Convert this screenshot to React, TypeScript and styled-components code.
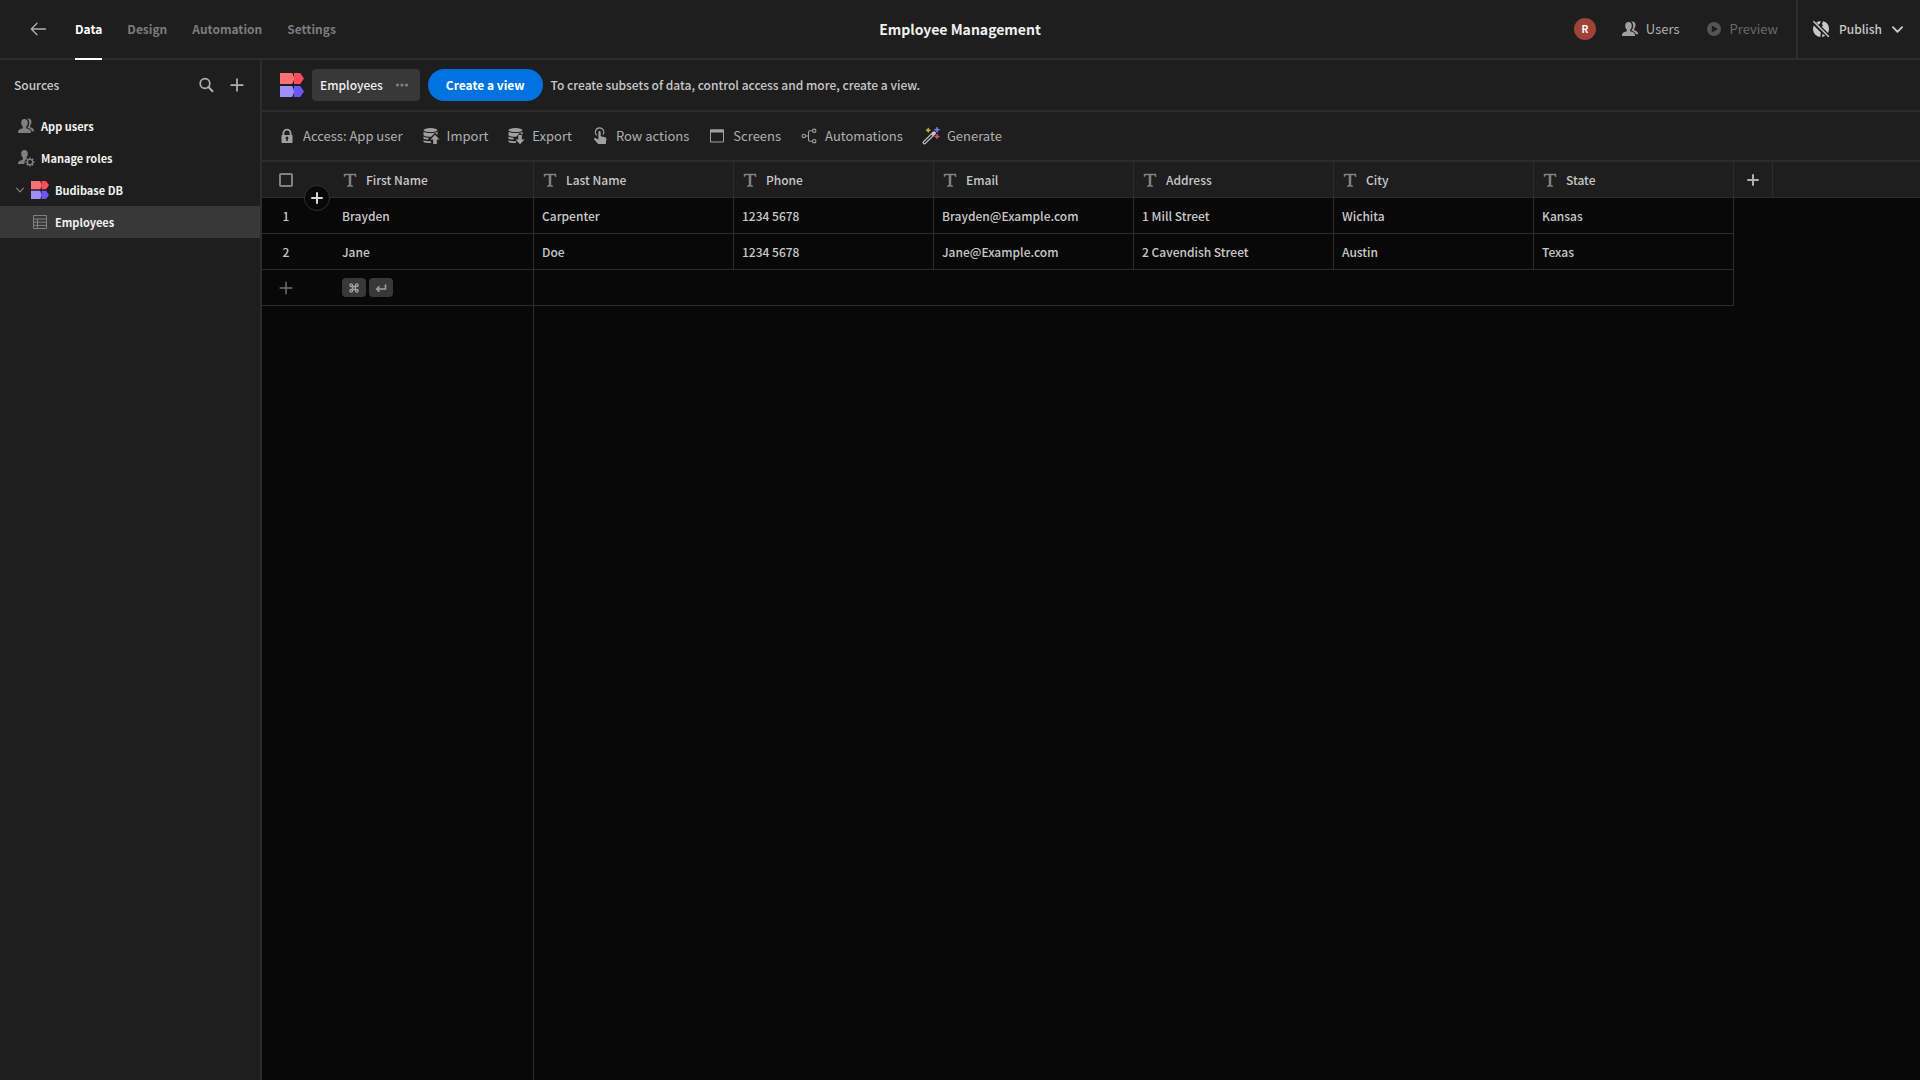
import React from "react";
import styled, { createGlobalStyle } from "styled-components";

const c = {
  panel: "#1e1e1e",
  canvas: "#080808",
  line: "#2c2c2c",
  raised: "#383838",
  text: "#c8c8c8",
  bright: "#f0f0f0",
  soft: "#b0b0b0",
  muted: "#7c7c7c",
  icon: "#a0a0a0",
  accent: "#0073e0",
};

const GlobalStyle = createGlobalStyle`
  *, *::before, *::after { box-sizing: border-box; }
  body { margin: 0; background: ${c.canvas}; }
  body, button, input, table {
    font-family: "Noto Sans CJK SC", "Noto Sans", sans-serif;
    font-size: 12px;
    line-height: 20px;
    color: ${c.text};
  }
  button { background: none; border: 0; padding: 0; cursor: pointer; }
  a { color: inherit; text-decoration: none; }
  svg { display: block; flex: none; }
`;

const Page = styled.div`
  min-height: 100vh;
  display: flex;
  flex-direction: column;
`;

const TopBar = styled.header`
  display: grid;
  grid-template-columns: 1fr auto 1fr;
  height: 60px;
  background: ${c.panel};
  border-bottom: 2px solid ${c.line};
`;

const TopLeft = styled.div`
  display: flex;
  align-items: stretch;
  gap: 28px;
  padding-left: 30px;
`;

const IconButton = styled.button<{ $muted?: boolean }>`
  display: flex;
  align-items: center;
  justify-content: center;
  min-width: 16px;
  color: ${(p) => (p.$muted ? "#707070" : c.soft)};
`;

const Tabs = styled.nav`
  display: flex;
  gap: 25px;
`;

const Tab = styled.a<{ $active?: boolean }>`
  display: flex;
  align-items: center;
  font-weight: 700;
  color: ${(p) => (p.$active ? "#ffffff" : c.muted)};
  border-bottom: 2px solid ${(p) => (p.$active ? "#ffffff" : "transparent")};
  margin-bottom: -2px;
`;

const AppTitle = styled.h1`
  margin: 0;
  align-self: center;
  font-size: 14px;
  font-weight: 700;
  color: ${c.bright};
`;

const TopRight = styled.div`
  display: flex;
  align-items: stretch;
  justify-content: flex-end;
`;

const TopActions = styled.div`
  display: flex;
  align-items: center;
  gap: 25px;
  padding-right: 18px;
`;

const Avatar = styled.span`
  display: flex;
  align-items: center;
  justify-content: center;
  width: 22px;
  height: 22px;
  border-radius: 50%;
  background: #9f4238;
  color: #ffffff;
  font-size: 10px;
  font-weight: 700;
`;

const Action = styled.button<{ $dim?: boolean }>`
  display: flex;
  align-items: center;
  gap: 7px;
  font-size: 13px;
  color: ${(p) => (p.$dim ? "#6a6a6a" : c.soft)};
  svg { color: ${(p) => (p.$dim ? "#555555" : c.icon)}; }
`;

const Publish = styled.button`
  display: flex;
  align-items: center;
  gap: 9px;
  padding: 0 16px 0 14px;
  border-left: 2px solid ${c.line};
  font-weight: 500;
  color: ${c.text};
`;

const Body = styled.div`
  flex: 1;
  display: flex;
`;

const Sidebar = styled.aside`
  flex: none;
  width: 262px;
  background: ${c.panel};
  border-right: 2px solid ${c.line};
`;

const SidebarHead = styled.div`
  display: flex;
  align-items: center;
  gap: 14px;
  height: 50px;
  padding: 0 15px 0 14px;
`;

const SidebarTitle = styled.h2`
  flex: 1;
  margin: 0;
  font-size: 12px;
  font-weight: 500;
  color: ${c.text};
`;

const NavItem = styled.a<{ $level?: number; $active?: boolean }>`
  display: flex;
  align-items: center;
  gap: 6px;
  height: 32px;
  padding-left: ${(p) => (p.$level === 2 ? 31 : p.$level === 1 ? 15 : 17)}px;
  font-size: 11px;
  font-weight: 700;
  color: ${c.bright};
  background: ${(p) => (p.$active ? c.raised : "transparent")};
  svg { color: #808080; }
`;

const Main = styled.main`
  flex: 1;
  min-width: 0;
  display: flex;
  flex-direction: column;
`;

const SourceBar = styled.div`
  display: flex;
  align-items: center;
  gap: 8px;
  height: 52px;
  padding-left: 18px;
  background: ${c.panel};
  border-bottom: 2px solid ${c.line};
`;

const TableTab = styled.button`
  display: flex;
  align-items: center;
  gap: 12px;
  height: 32px;
  padding: 0 11px 0 8px;
  border-radius: 4px;
  background: ${c.raised};
  color: ${c.bright};
  font-weight: 500;
  svg { color: #828282; }
`;

const CreateView = styled.button`
  height: 32px;
  padding: 0 18px;
  border-radius: 16px;
  background: ${c.accent};
  color: #ffffff;
  font-weight: 700;
`;

const Hint = styled.p`
  margin: 0;
  font-weight: 500;
`;

const Toolbar = styled.div`
  display: flex;
  align-items: center;
  gap: 19px;
  height: 50px;
  padding-left: 16px;
  background: ${c.panel};
  border-bottom: 2px solid ${c.line};
`;

const GridArea = styled.div`
  position: relative;
  flex: 1;
  display: flex;
  flex-direction: column;
  background: ${c.canvas};
`;

const Table = styled.table`
  width: 100%;
  table-layout: fixed;
  border-collapse: separate;
  border-spacing: 0;
  font-weight: 500;
`;

const Col = styled.col<{ $w?: number }>`
  width: ${(p) => (p.$w ? `${p.$w}px` : "auto")};
`;

const HeadCell = styled.th<{ $edge?: boolean }>`
  height: 36px;
  padding: 0 8px;
  text-align: left;
  font-weight: 500;
  background: ${c.panel};
  border-bottom: 1px solid ${c.line};
  border-right: ${(p) => (p.$edge ? `1px solid ${c.line}` : "0")};
`;

const Cell = styled.td<{ $edge?: boolean }>`
  height: 36px;
  padding: 0 8px;
  border-bottom: 1px solid ${c.line};
  border-right: ${(p) => (p.$edge ? `1px solid ${c.line}` : "0")};
`;

const GutterCell = styled(Cell)`
  padding: 0 24px 0 0;
  text-align: center;
`;

const Label = styled.span`
  display: flex;
  align-items: center;
  gap: 8px;
`;

const Center = styled.span`
  display: flex;
  align-items: center;
  justify-content: center;
`;

const Check = styled.input`
  appearance: none;
  display: block;
  width: 14px;
  height: 14px;
  margin: 0 0 0 9px;
  border: 2px solid #808080;
  border-radius: 2px;
`;

const Keys = styled.span`
  display: flex;
  gap: 3px;
`;

const Key = styled.kbd`
  display: flex;
  align-items: center;
  justify-content: center;
  width: 24px;
  height: 19px;
  border-radius: 4px;
  background: ${c.raised};
  color: ${c.icon};
`;

const StickyRest = styled.div`
  flex: 1;
  width: 272px;
  border-right: 1px solid ${c.line};
`;

const InsertRow = styled.button`
  position: absolute;
  top: 23px;
  left: 42px;
  display: flex;
  align-items: center;
  justify-content: center;
  width: 26px;
  height: 26px;
  border: 1px solid #303030;
  border-radius: 50%;
  background: ${c.canvas};
  color: #d8d8d8;
`;

const Svg = ({ s = 18, children }: { s?: number; children: React.ReactNode }) => (
  <svg width={s} height={s} viewBox="0 0 18 18" fill="currentColor" aria-hidden="true">
    {children}
  </svg>
);

const Plus = ({ s = 12, w = 2 }: { s?: number; w?: number }) => (
  <svg width={s} height={s} viewBox="0 0 12 12" fill="none" stroke="currentColor" strokeWidth={w} strokeLinecap="round" aria-hidden="true">
    <path d="M6 1v10M1 6h10" />
  </svg>
);

const Logo = ({ s }: { s: number }) => (
  <svg width={s} height={s} viewBox="0 0 24 24" aria-hidden="true">
    <path d="M0 0h11.600c.4 0 .7.2.9.5L14 4.500v2l-1.500 4c-.2.3-.5.5-.9.500H0z" fill="#ff7076" />
    <path d="M14 0h5.400c.5 0 .9.2 1.200.6L24 5.500l-3.400 4.900c-.3.4-.7.6-1.200.6H14z" fill="#ff4b5c" />
    <path d="M0 13h11.600c.4 0 .7.2.9.5l1.500 4v2l-1.500 4c-.2.3-.5.5-.9.500H0z" fill="#a08ffa" />
    <path d="M14 13h5.400c.5 0 .9.2 1.200.6L24 18.500l-3.400 4.900c-.3.4-.7.6-1.200.6H14z" fill="#6b57f2" />
  </svg>
);

const UsersIcon = () => (
  <Svg>
    <path d="M7.500 2C5.300 2 4.200 3.600 4.200 5.700c0 1.600.7 3 1.600 3.900v1.300c0 .4-.3.600-.7.700C2.600 12.200 1 13.300 1 15.300v.700h13v-.700c0-2-1.600-3.100-4.100-3.700-.4-.1-.7-.3-.7-.7V9.600c.9-.9 1.600-2.300 1.600-3.900C10.800 3.600 9.700 2 7.500 2z" />
    <path d="M10.300 1.500c2.500-.5 4.200 1 4.200 3.400 0 1.500-.5 2.700-1.300 3.500v1.300c0 .4.2.6.6.7 2 .6 3.300 1.600 3.300 3.300v.5h-2.200c-.5-1.700-2-2.800-4.200-3.500v-.6c.9-1.100 1.500-2.600 1.500-4.200 0-1.900-.700-3.400-1.900-4.400z" />
  </Svg>
);

const RolesIcon = () => (
  <Svg>
    <path d="M7.500 1C5.300 1 4.200 2.600 4.200 4.700c0 1.600.7 3 1.600 3.900v1.600c0 .4-.3.600-.7.700C2.600 11.500 1 12.500 1 14.500v.5h6.500a5.600 5.600 0 0 1 2.500-5.400c-.5-.2-.8-.5-.8-1 .9-.9 1.600-2.300 1.600-3.900C10.800 2.600 9.700 1 7.500 1z" />
    <circle cx="13" cy="13" r="2.700" fill="none" stroke="currentColor" strokeWidth="1.300" />
    <path d="M13 8.500v1.800M13 15.700v1.800M8.500 13h1.800M15.700 13h1.800M9.800 9.800l1.300 1.300M14.900 14.900l1.300 1.300M9.800 16.200l1.300-1.300M14.900 11.100l1.300-1.300" stroke="currentColor" strokeWidth="1.500" />
  </Svg>
);

const TableIcon = () => (
  <Svg>
    <path d="M2.500 2.500h13v13h-13zM2.500 6h13M2.500 9.200h13M2.500 12.400h13M6.500 6v9.500" fill="none" stroke="currentColor" />
  </Svg>
);

const LockIcon = () => (
  <Svg>
    <path fillRule="evenodd" d="M14 8h-.5V6.300a4.500 4.500 0 0 0-9 0V8H4c-.3 0-.5.2-.5.5v7c0 .3.200.5.500.5h10c.3 0 .5-.2.5-.5v-7c0-.3-.2-.5-.5-.5zM6.300 6.300a2.700 2.700 0 0 1 5.400 0V8H6.300zM9.800 12.200V14H8.200v-1.800a1.400 1.400 0 1 1 1.600 0z" />
  </Svg>
);

const DataIcon = ({ down }: { down?: boolean }) => (
  <Svg>
    <ellipse cx="8.500" cy="3.100" rx="7" ry="2" />
    <path d="M1.500 4.800c2.500 1.700 11.500 1.700 14 0v3.100L13 5.800 9.200 9.700C6 9.800 3 9.400 1.500 8.200zM1.500 9.600c1.300.9 3.200 1.200 5.600 1.300L5.700 12.700c-1.800-.1-3.300-.4-4.200-.9zM1.500 13.200c1.300.7 3.800 1 7.500 1v1.900c-3.700.1-6.300-.3-7.500-1.100z" />
    {down ? (
      <path d="M11.200 8h3.600v4.500H17.500L13 17.200l-4.500-4.700h2.700z" />
    ) : (
      <path d="M11.200 17h3.600v-4.500H17.500L13 7.800l-4.500 4.700h2.700z" />
    )}
  </Svg>
);

const TapIcon = () => (
  <Svg>
    <path d="M5.800 8.300A4.200 4.200 0 1 1 12 7.500" fill="none" stroke="currentColor" strokeWidth="1.300" />
    <path d="M7.400 5.200c0-1.600 2.300-1.600 2.300 0v4.100l4.300.9c1 .2 1.500.8 1.400 1.800l-.6 5H7.200l-4.100-4.500c-.6-.8.4-1.900 1.400-1.400l2.900 1.600z" />
  </Svg>
);

const ScreenIcon = () => (
  <Svg>
    <path d="M2.500 3h13v12h-13z" fill="none" stroke="currentColor" />
    <path d="M2 2.500h14v3H2z" />
  </Svg>
);

const BranchIcon = () => (
  <Svg>
    <g fill="none" stroke="currentColor" strokeWidth="1.100">
      <circle cx="3.700" cy="9" r="1.700" />
      <circle cx="14.200" cy="3.800" r="1.700" />
      <circle cx="14.200" cy="14.200" r="1.700" />
      <path d="M5.400 9h3.100M12.500 3.800H10c-1 0-1.500.5-1.500 1.500v7.400c0 1 .5 1.500 1.500 1.500h2.500" />
    </g>
  </Svg>
);

const WandIcon = () => (
  <Svg>
    <path d="M2.500 15.500L12 6.200" stroke="#c4c4c4" strokeWidth="3.800" strokeLinecap="round" />
    <path d="M2.500 15.500L9.600 8.500" stroke={c.panel} strokeWidth="1.300" strokeLinecap="round" />
    <path d="M6.200.8l.7 1.700 1.700.7-1.700.7-.7 1.700-.7-1.700-1.700-.7 1.700-.7z" fill="#d6b044" stroke="#d6b044" strokeWidth=".6" />
    <path d="M15 0l.8 2 2 .8-2 .8-.8 2-.8-2-2-.8 2-.8z" fill="#7480e8" stroke="#7480e8" strokeWidth=".6" />
    <path d="M15 7l.7 1.800 1.800.7-1.800.7L15 12l-.7-1.800-1.800-.7 1.800-.7z" fill="#e05260" stroke="#e05260" strokeWidth=".6" />
  </Svg>
);

const TextIcon = () => (
  <Svg s={16}>
    <path d="M2 2h14v3.600h-1.200c-.1-1.400-.6-2-2-2h-2.400v10.600c0 .8.4 1 2 1.100V16.500H5.600v-1.200c1.600-.1 2-.3 2-1.100V3.600H5.200c-1.400 0-1.900.6-2 2H2z" fill="#808080" />
  </Svg>
);

const PlayIcon = () => (
  <Svg>
    <path fillRule="evenodd" d="M9 2a7 7 0 1 0 0 14A7 7 0 0 0 9 2zM6.800 5.500L13 9l-6.200 3.500z" />
  </Svg>
);

const GlobeOffIcon = () => (
  <Svg>
    <path d="M4.200 2.500A8 8 0 0 1 8.800 1L8 3.500l-1.300 1.300zM11.200 1.300A8 8 0 0 1 17 9c0 1.500-.4 2.900-1 4L9.800 6.800l1.200-1.300L9.800 4z" />
    <path d="M1.800 5.500l7 7L8.300 17A8 8 0 0 1 1 9c0-1.300.3-2.500.8-3.500zM10.500 13.800l2.700 2a8 8 0 0 1-3.200 1.100z" />
    <path d="M1.400 1.200l15.400 15.600" stroke="currentColor" strokeWidth="1.500" />
  </Svg>
);

const ChevronDown = ({ s = 10, w = 2 }: { s?: number; w?: number }) => (
  <svg width={s} height={s} viewBox="0 0 10 10" fill="none" stroke="currentColor" strokeWidth={w} strokeLinecap="round" strokeLinejoin="round" aria-hidden="true">
    <path d="M1.500 3.200L5 6.800l3.500-3.600" />
  </svg>
);

const columns = ["First Name", "Last Name", "Phone", "Email", "Address", "City", "State"];

const people = [
  ["Brayden", "Carpenter", "1234 5678", "Brayden@Example.com", "1 Mill Street", "Wichita", "Kansas"],
  ["Jane", "Doe", "1234 5678", "Jane@Example.com", "2 Cavendish Street", "Austin", "Texas"],
];

const tools: [string, React.ReactNode][] = [
  ["Access: App user", <LockIcon />],
  ["Import", <DataIcon />],
  ["Export", <DataIcon down />],
  ["Row actions", <TapIcon />],
  ["Screens", <ScreenIcon />],
  ["Automations", <BranchIcon />],
  ["Generate", <WandIcon />],
];

export default function App() {
  return (
    <Page>
      <GlobalStyle />
      <TopBar>
        <TopLeft>
          <IconButton aria-label="Back">
            <svg width="17" height="14" viewBox="0 0 17 14" fill="none" stroke="currentColor" strokeWidth="1.300" strokeLinecap="round" strokeLinejoin="round">
              <path d="M15.500 7h-14M7 1.200L1.300 7 7 12.800" />
            </svg>
          </IconButton>
          <Tabs>
            <Tab href="#data" $active>Data</Tab>
            <Tab href="#design">Design</Tab>
            <Tab href="#automation">Automation</Tab>
            <Tab href="#settings">Settings</Tab>
          </Tabs>
        </TopLeft>
        <AppTitle>Employee Management</AppTitle>
        <TopRight>
          <TopActions>
            <Avatar>R</Avatar>
            <Action><UsersIcon />Users</Action>
            <Action $dim><PlayIcon />Preview</Action>
          </TopActions>
          <Publish>
            <GlobeOffIcon />
            Publish
            <ChevronDown s={13} w={1.5} />
          </Publish>
        </TopRight>
      </TopBar>
      <Body>
        <Sidebar>
          <SidebarHead>
            <SidebarTitle>Sources</SidebarTitle>
            <IconButton aria-label="Search">
              <Svg>
                <circle cx="8" cy="7.500" r="4.800" fill="none" stroke="currentColor" strokeWidth="1.700" />
                <path d="M11.500 11l4 4.200" stroke="currentColor" strokeWidth="2" strokeLinecap="round" />
              </Svg>
            </IconButton>
            <IconButton aria-label="Add source"><Plus s={14} w={1.5} /></IconButton>
          </SidebarHead>
          <NavItem href="#users"><UsersIcon />App users</NavItem>
          <NavItem href="#roles"><RolesIcon />Manage roles</NavItem>
          <NavItem href="#db" $level={1}>
            <ChevronDown w={1.2} />
            <Logo s={18} />
            Budibase DB
          </NavItem>
          <NavItem href="#employees" $level={2} $active><TableIcon />Employees</NavItem>
        </Sidebar>
        <Main>
          <SourceBar>
            <Logo s={24} />
            <TableTab>
              Employees
              <svg width="14" height="4" viewBox="0 0 14 4" fill="currentColor" aria-hidden="true">
                <circle cx="2.500" cy="2" r="1.600" />
                <circle cx="7" cy="2" r="1.600" />
                <circle cx="11.500" cy="2" r="1.600" />
              </svg>
            </TableTab>
            <CreateView>Create a view</CreateView>
            <Hint>To create subsets of data, control access and more, create a view.</Hint>
          </SourceBar>
          <Toolbar>
            {tools.map(([name, icon]) => (
              <Action key={name}>{icon}{name}</Action>
            ))}
          </Toolbar>
          <GridArea>
            <Table>
              <colgroup>
                <Col $w={72} />
                {columns.map((name) => <Col key={name} $w={200} />)}
                <Col $w={39} />
                <Col />
              </colgroup>
              <thead>
                <tr>
                  <HeadCell><Check type="checkbox" aria-label="Select all rows" /></HeadCell>
                  {columns.map((name) => (
                    <HeadCell key={name} $edge><Label><TextIcon />{name}</Label></HeadCell>
                  ))}
                  <HeadCell $edge><Center><IconButton aria-label="Add column"><Plus /></IconButton></Center></HeadCell>
                  <HeadCell />
                </tr>
              </thead>
              <tbody>
                {people.map((row, i) => (
                  <tr key={row[0]}>
                    <GutterCell>{i + 1}</GutterCell>
                    {row.map((value, j) => <Cell key={j} $edge>{value}</Cell>)}
                  </tr>
                ))}
                <tr>
                  <GutterCell><Center><IconButton $muted aria-label="Add row"><Plus s={14} w={1.3} /></IconButton></Center></GutterCell>
                  <Cell $edge>
                    <Keys>
                      <Key>
                        <svg width="10" height="10" viewBox="0 0 10 10" fill="none" stroke="currentColor" strokeWidth="1.400" aria-hidden="true">
                          <path d="M3.500 3.500h3v3h-3zM3.500 3.500H2.200A1.300 1.300 0 1 1 3.500 2.200zM6.500 3.500V2.200a1.300 1.300 0 1 1 1.300 1.300zM6.500 6.500h1.300a1.300 1.300 0 1 1-1.300 1.300zM3.500 6.500v1.300a1.300 1.300 0 1 1-1.300-1.300z" />
                        </svg>
                      </Key>
                      <Key>
                        <svg width="12" height="10" viewBox="0 0 12 10" fill="none" stroke="currentColor" strokeWidth="1.500" aria-hidden="true">
                          <path d="M10.500 1.500V6H2M4.500 3.200L1.700 6l2.800 2.800" />
                        </svg>
                      </Key>
                    </Keys>
                  </Cell>
                  <Cell $edge colSpan={6} />
                </tr>
              </tbody>
            </Table>
            <StickyRest />
            <InsertRow aria-label="Insert row"><Plus /></InsertRow>
          </GridArea>
        </Main>
      </Body>
    </Page>
  );
}
